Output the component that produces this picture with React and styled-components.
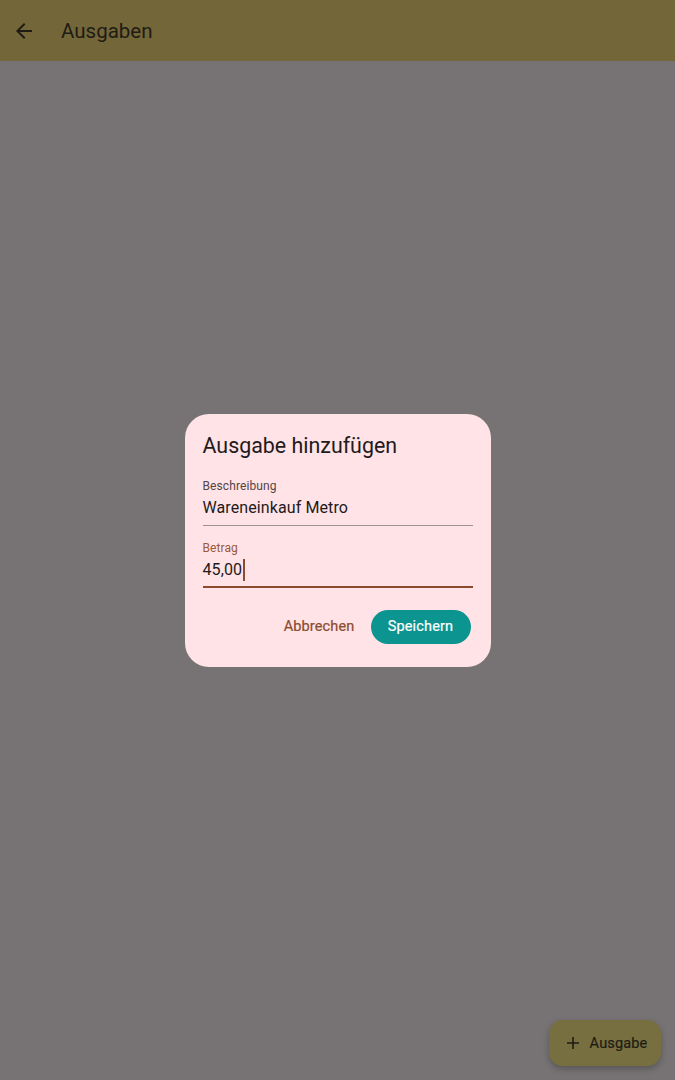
import React from "react";
import styled, { createGlobalStyle } from "styled-components";

const Global = createGlobalStyle`
  html, body { margin: 0; padding: 0; }
  body { font-family: Roboto, "Noto Sans", sans-serif; background: #777374; }
  * { box-sizing: border-box; }
`;

const Screen = styled.div`
  position: relative;
  width: 675px;
  height: 1080px;
  background: #777374;
  display: flex;
  flex-direction: column;
  overflow: hidden;
`;

const AppBar = styled.header`
  height: 61px;
  background: #736639;
  display: flex;
  align-items: center;
  padding-left: 12px;
  gap: 25px;
  color: #1f1c14;
`;

const IconBtn = styled.div`
  width: 24px;
  height: 24px;
  display: flex;
  align-items: center;
  justify-content: center;
`;

const Title = styled.h1`
  margin: 0;
  font-size: 20.5px;
  font-weight: 400;
  letter-spacing: 0;
`;

const Overlay = styled.div`
  position: absolute;
  inset: 0;
  display: flex;
  align-items: center;
  justify-content: center;
`;

const Dialog = styled.div`
  width: 306px;
  background: #ffe3e6;
  border-radius: 24px;
  padding: 18px 20px 23px 18px;
  display: flex;
  flex-direction: column;
`;

const DialogTitle = styled.h2`
  margin: 0 0 18px;
  font-size: 21.4px;
  font-weight: 400;
  line-height: 28px;
  color: #231a1b;
`;

const Field = styled.div`
  display: flex;
  flex-direction: column;
  margin-right: -2px;
  margin-bottom: ${p => p.$mb || 0}px;
  border-bottom: ${p => (p.$focused ? "2px solid #8c4b2e" : "1px solid #9d9293")};
  padding-bottom: ${p => (p.$focused ? 4 : 5)}px;
`;

const Label = styled.span`
  font-size: 12px;
  line-height: 16px;
  color: ${p => (p.$focused ? "#9a5939" : "#524546")};
  letter-spacing: 0.1px;
`;

const Value = styled.span`
  font-size: 16px;
  line-height: 24px;
  margin-top: 2px;
  color: #231a1b;
  letter-spacing: 0.1px;
  display: flex;
  align-items: center;
`;

const Caret = styled.span`
  display: inline-block;
  width: 2px;
  height: 22px;
  background: #8c4b2e;
  margin-left: 1px;
`;

const Actions = styled.div`
  display: flex;
  justify-content: flex-end;
  align-items: center;
  gap: 16px;
  margin-top: 22px;
`;

const TextButton = styled.button`
  border: none;
  background: transparent;
  font-family: inherit;
  font-size: 14.5px;
  font-weight: 400;
  -webkit-text-stroke: 0.2px #8c4b2e;
  color: #8c4b2e;
  letter-spacing: 0.15px;
  padding: 0;
  height: 34px;
`;

const FilledButton = styled.button`
  border: none;
  background: #0b9490;
  color: #ffffff;
  -webkit-text-stroke: 0.2px #ffffff;
  font-family: inherit;
  font-size: 14.5px;
  font-weight: 400;
  letter-spacing: 0.15px;
  height: 34px;
  width: 100px;
  border-radius: 17px;
`;

const Fab = styled.button`
  position: absolute;
  right: 14px;
  bottom: 14px;
  width: 112px;
  height: 46px;
  border: none;
  border-radius: 14px;
  background: #776f40;
  box-shadow: 0 3px 6px rgba(0,0,0,0.25);
  display: flex;
  align-items: center;
  justify-content: center;
  gap: 9px;
  padding-right: 4px;
  font-family: inherit;
  font-size: 14.5px;
  font-weight: 400;
  -webkit-text-stroke: 0.2px #1f1c14;
  letter-spacing: 0.15px;
  color: #1f1c14;
`;

export default function App() {
  return (
    <>
      <Global />
      <Screen>
        <AppBar>
          <IconBtn>
            <svg width="24" height="24" viewBox="0 0 24 24">
              <path d="M20 11H7.83l5.59-5.59L12 4l-8 8 8 8 1.41-1.41L7.83 13H20v-2z" fill="#1f1c14" />
            </svg>
          </IconBtn>
          <Title>Ausgaben</Title>
        </AppBar>
        <Overlay>
          <Dialog>
            <DialogTitle>Ausgabe hinzufügen</DialogTitle>
            <Field $mb={14}>
              <Label>Beschreibung</Label>
              <Value>Wareneinkauf Metro</Value>
            </Field>
            <Field $focused>
              <Label $focused>Betrag</Label>
              <Value>45,00<Caret /></Value>
            </Field>
            <Actions>
              <TextButton>Abbrechen</TextButton>
              <FilledButton>Speichern</FilledButton>
            </Actions>
          </Dialog>
        </Overlay>
        <Fab>
          <svg width="16" height="16" viewBox="0 0 24 24" fill="none">
            <path d="M12 3v18M3 12h18" stroke="#1f1c14" strokeWidth="2.4" />
          </svg>
          Ausgabe
        </Fab>
      </Screen>
    </>
  );
}
